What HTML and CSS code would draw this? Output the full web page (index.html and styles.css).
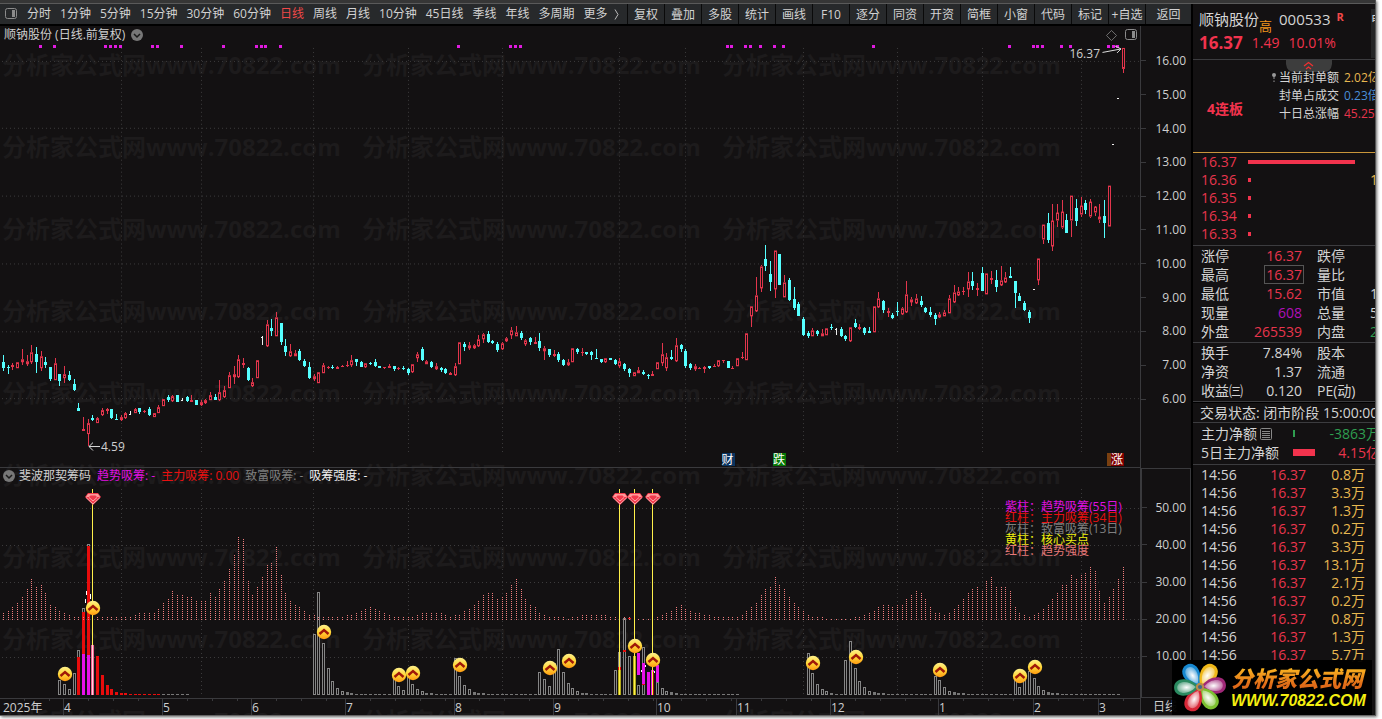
FILE: index.html
```html
<!DOCTYPE html>
<html lang="zh-CN">
<head>
<meta charset="utf-8">
<title>顺钠股份 000533 日线</title>
<link rel="stylesheet" href="styles.css">
</head>
<body>
<div class="app">
  <div class="titlebar"></div>
  <div class="main">
    <section class="left">
      <nav class="toolbar">
        <div class="periods">
          <svg class="ico-panel" viewBox="0 0 12 12"><rect x="0.5" y="0.5" width="11" height="10" rx="2" fill="none" stroke="#8b8b8b"/><rect x="7" y="2" width="3" height="7" fill="#8b8b8b"/></svg>
          <button>分时</button><button>1分钟</button><button>5分钟</button><button>15分钟</button><button>30分钟</button><button>60分钟</button><button class="active">日线</button><button>周线</button><button>月线</button><button>10分钟</button><button>45日线</button><button>季线</button><button>年线</button><button>多周期</button><button class="more">更多<svg viewBox="0 0 5 11"><path d="M1 0.5L4 5.5L1 10.5" fill="none" stroke="#bbb"/></svg></button>
        </div>
        <div class="tools">
          <button>复权</button><button>叠加</button><button>多股</button><button>统计</button><button>画线</button><button>F10</button><button>逐分</button><button>同资</button><button>开资</button><button>简框</button><button>小窗</button><button>代码</button><button>标记</button><button>+自选</button><button class="back">返回</button>
        </div>
      </nav>
      <div class="charts">
        <div class="watermark" id="watermark" aria-hidden="true"></div>
        <div class="plot price-plot">
          <svg class="canvas" id="price" viewBox="0 26 1140 442" preserveAspectRatio="none"></svg>
          <div class="plot-title"><span>顺钠股份 (日线.前复权)</span><svg class="ico-circle" viewBox="0 0 12 12"><circle cx="6" cy="6" r="6" fill="#777"/><path d="M3 5L6 8L9 5" fill="none" stroke="#1a1a1a" stroke-width="1.5"/></svg></div>
          <div class="plot-actions">
            <svg class="ico-diamond" viewBox="0 0 12 12"><path d="M6 0.5L11.5 6L6 11.5L0.5 6Z" fill="none" stroke="#777"/></svg>
            <svg class="ico-panel" viewBox="0 0 12 12"><rect x="0.5" y="0.5" width="11" height="10" rx="2" fill="none" stroke="#8b8b8b"/><rect x="7" y="2" width="3" height="7" fill="#8b8b8b"/></svg>
          </div>
          <span class="mark high">16.37</span>
          <span class="mark low">4.59</span>
          <span class="flag cai">财</span><span class="flag die">跌</span><span class="flag zhang">涨</span>
        </div>
        <div class="scale price-scale"><span>16.00</span><span>15.00</span><span>14.00</span><span>13.00</span><span>12.00</span><span>11.00</span><span>10.00</span><span>9.00</span><span>8.00</span><span>7.00</span><span>6.00</span></div>
        <div class="plot ind-plot">
          <svg class="canvas" id="indicator" viewBox="0 468 1140 230" preserveAspectRatio="none"></svg>
          <div class="ind-title"><svg class="ico-circle" viewBox="0 0 12 12"><circle cx="6" cy="6" r="6" fill="#777"/><path d="M3 5L6 8L9 5" fill="none" stroke="#1a1a1a" stroke-width="1.5"/></svg><span>斐波那契筹码</span><span class="magenta">趋势吸筹: -</span><span class="pure-red">主力吸筹: 0.00</span><span class="grey">致富吸筹: -</span><span class="white">吸筹强度: -</span></div>
          <div class="legend"><span class="magenta">紫柱：趋势吸筹(55日)</span><span class="pure-red">红柱：主力吸筹(34日)</span><span class="grey">灰柱：致富吸筹(13日)</span><span class="yellow">黄柱：核心买点</span><span class="salmon">红柱：趋势强度</span></div>
        </div>
        <div class="scale ind-scale"><span>50.00</span><span>40.00</span><span>30.00</span><span>20.00</span><span>10.00</span></div>
        <div class="months"><span>2025年</span><span>4</span><span>5</span><span>6</span><span>7</span><span>8</span><span>9</span><span>10</span><span>11</span><span>12</span><span>1</span><span>2</span><span>3</span></div>
        <div class="period-name">日线</div>
      </div>
    </section>
    <aside class="quote">
      <header>
        <div class="name"><span class="stock">顺钠股份</span><span class="tag">高</span><span class="code">000533</span><b>R</b><span class="edge">电</span></div>
        <div class="last"><strong>16.37</strong><span>1.49</span><span>10.01%</span></div>
      </header>
      <div class="board">
        <svg class="pull" viewBox="0 0 46 12"><path d="M0 0H46V4Q45 12 38 12H8Q1 12 0 4Z" fill="#3d3d3d"/><path d="M18 6L22.500 2.500L27 6M20 9L22.500 7L25 9" fill="none" stroke="#f23030" stroke-width="1.200"/></svg>
        <strong>4连板</strong>
        <table>
          <tr><th><svg viewBox="0 0 4 10"><circle cx="2" cy="2" r="2" fill="#999"/><path d="M2 3V6M2 7.500V9" stroke="#999"/></svg>当前封单额</th><td class="gold">2.02亿</td></tr>
          <tr><th>封单占成交</th><td class="blue">0.23倍</td></tr>
          <tr><th>十日总涨幅</th><td class="red">45.25%</td></tr>
        </table>
      </div>
      <ul class="depth">
        <li><span>16.37</span><i class="full"></i></li><li><span>16.36</span><i></i><em>1</em></li><li><span>16.35</span><i></i></li><li><span>16.34</span><i></i></li><li><span>16.33</span><i></i></li>
      </ul>
      <table class="stats">
        <tr><th>涨停</th><td class="red">16.37</td><th>跌停</th><td></td></tr>
        <tr><th>最高</th><td class="red"><span class="boxed">16.37</span></td><th>量比</th><td></td></tr>
        <tr><th>最低</th><td class="red">15.62</td><th>市值</th><td>1</td></tr>
        <tr><th>现量</th><td class="purple">608</td><th>总量</th><td>5</td></tr>
        <tr><th>外盘</th><td class="red">265539</td><th>内盘</th><td class="green">2</td></tr>
      </table>
      <table class="stats">
        <tr><th>换手</th><td>7.84%</td><th>股本</th><td></td></tr>
        <tr><th>净资</th><td>1.37</td><th>流通</th><td></td></tr>
        <tr><th>收益㈢</th><td>0.120</td><th>PE(动)</th><td></td></tr>
      </table>
      <div class="status">交易状态: 闭市阶段 15:00:00</div>
      <div class="flows">
        <div><span>主力净额</span><svg class="ico-list" viewBox="0 0 12 12"><rect x="0.500" y="0.500" width="11" height="11" rx="1" fill="none" stroke="#888"/><path d="M2 3.500H10M2 5.500H10M2 7.500H10M2 9.500H10" stroke="#888"/></svg><i class="out"></i><span class="val green">-3863万</span></div>
        <div><span>5日主力净额</span><i class="in"></i><span class="val red">4.15亿</span></div>
      </div>
      <table class="ticks">
        <tr><td>14:56</td><td>16.37</td><td>0.8万</td></tr><tr><td>14:56</td><td>16.37</td><td>3.3万</td></tr><tr><td>14:56</td><td>16.37</td><td>1.3万</td></tr><tr><td>14:56</td><td>16.37</td><td>0.2万</td></tr><tr><td>14:56</td><td>16.37</td><td>3.3万</td></tr><tr><td>14:56</td><td>16.37</td><td>13.1万</td></tr><tr><td>14:56</td><td>16.37</td><td>2.1万</td></tr><tr><td>14:56</td><td>16.37</td><td>0.2万</td></tr><tr><td>14:56</td><td>16.37</td><td>0.8万</td></tr><tr><td>14:56</td><td>16.37</td><td>1.3万</td></tr><tr><td>14:56</td><td>16.37</td><td>5.7万</td></tr>
      </table>
    </aside>
  </div>
  <div class="logo">
    <svg viewBox="0 0 52 52">
      <defs>
        <radialGradient id="lp"><stop offset="0" stop-color="#fff"/><stop offset="1" stop-color="#fff" stop-opacity="0.350"/></radialGradient>
      </defs>
      <g id="petals"></g>
      <circle cx="27" cy="25" r="4" fill="#b98a4a"/><circle cx="27" cy="25" r="2" fill="#3c6a8a"/>
    </svg>
    <div class="logo-text"><span class="cn">分析家公式网</span><span class="url">WWW.70822.COM</span></div>
  </div>
</div>
<script src="chart.js"></script>
</body>
</html>
```
FILE: styles.css
```css
* { box-sizing: border-box; }
html { background: #fff; }
body { margin: 0; font: 12px/18px "Open Sans", "Noto Sans CJK SC", sans-serif; color: #cfcfcf; overflow: hidden; }
button { font: inherit; color: inherit; background: none; border: 0; padding: 0; white-space: nowrap; }
table { border-collapse: collapse; border-spacing: 0; }
th, td { padding: 0; font-weight: 400; text-align: left; }
svg { display: block; flex: none; }

.app { position: relative; display: flex; flex-direction: column; height: calc(100vh - 3px); margin: 0 6px 3px 0; background: #131112; border-right: 1px solid #555; border-bottom: 1px solid #666; box-shadow: 1px 1px 3px #666; }
.titlebar { height: 4px; background: #363636; border-bottom: 1px solid #5a5a5a; }
.main { flex: 1; min-height: 0; display: grid; grid-template-columns: minmax(0, 1fr) 182px; }
.left { display: flex; flex-direction: column; min-width: 0; min-height: 0; border-right: 2px solid #000; }

.toolbar { display: flex; height: 22px; background: #27292b; border-bottom: 2px solid #000; overflow: hidden; line-height: 22px; color: #d2d2d2; }
.periods { flex: 1; display: flex; align-items: center; gap: 9px; padding-left: 5px; overflow: hidden; }
.periods .ico-panel { margin-right: 1px; }
.ico-panel, .ico-circle, .ico-list { width: 12px; height: 12px; }
.ico-diamond { width: 11px; height: 11px; }
.active { color: #f04848; }
.more { display: flex; align-items: center; gap: 6px; }
.more svg { width: 5px; height: 11px; }
.tools { display: flex; }
.tools button { width: 37px; border-left: 1px solid #0a0a0a; }
.tools .back { width: 46px; }

.charts { position: relative; flex: 1; min-height: 0; display: grid; grid-template-columns: minmax(0, 1fr) 51px; grid-template-rows: minmax(0, 442fr) minmax(0, 230fr) 17px; overflow: hidden; }
.watermark { position: absolute; inset: -2px 51px 0 2px; display: grid; grid-template-columns: repeat(3, 360px); grid-auto-rows: 82px; font-weight: 700; font-size: 24px; line-height: 82px; color: #1d1b1c; white-space: nowrap; overflow: hidden; }
.plot { position: relative; min-width: 0; min-height: 0; }
.canvas { position: absolute; inset: 0; width: 100%; height: 100%; }
.price-plot { border-bottom: 1px solid #3a3a3d; }
.plot-title { position: relative; display: flex; align-items: center; gap: 6px; padding-left: 4px; }
.plot-actions { position: absolute; top: 3px; right: 3px; display: flex; align-items: center; gap: 8px; }
.mark { position: absolute; line-height: 14px; }
.high { top: 21px; right: 40px; }
.low { top: 414px; left: 101px; }
.flag { position: absolute; bottom: 1px; height: 13px; line-height: 13px; width: 13px; color: #fff; }
.cai { left: 63.3%; background: #0a3460; }
.die { left: 67.8%; background: #067806; }
.zhang { left: 97.1%; width: 17px; padding-left: 4px; background: linear-gradient(90deg, #7a4010 4px, #800000 4px); }
.ind-title { position: relative; display: flex; align-items: center; gap: 6px; padding-left: 3px; line-height: 16px; }
.ind-title .ico-circle { margin-right: -2px; }
.legend { position: absolute; top: 33px; right: 17px; display: flex; flex-direction: column; width: 118px; line-height: 11px; white-space: nowrap; }
.magenta { color: #e010e0; }
.pure-red { color: #e81010; }
.grey { color: #7f7f7f; }
.white { color: #f0f0f0; }
.yellow { color: #f0f010; }
.salmon { color: #e87a7a; }
.scale { position: relative; display: flex; flex-direction: column; border-left: 1px solid #3a3a3d; padding-right: 5px; }
.scale span { flex: 1; display: flex; align-items: center; justify-content: flex-end; }
.scale span::before { content: ""; width: 5px; border-top: 1px solid #3a3a3d; margin-right: auto; }
.price-scale { padding-top: 18px; padding-bottom: 52px; }
.ind-scale { padding-top: 20px; padding-bottom: 22px; border: 1px solid #3a3a3d; border-left-width: 2px; padding-right: 4px; }
.months { position: relative; display: grid; grid-template-columns: 63fr 99fr 89fr 94fr 109fr 99fr 103fr 80fr 94fr 108fr 95fr 65fr 42fr; border-top: 1px solid #3a3a3d; line-height: 18px; overflow: hidden; }
.months span { border-left: 1px solid #3a3a3d; background: repeating-linear-gradient(90deg, transparent 0 24px, #3a3a3d 24px 25px) 0 0 / 100% 2px no-repeat; }
.months span:first-child { padding-left: 3px; border: 0; }
.period-name { position: relative; padding-left: 12px; line-height: 18px; border-left: 1px solid #3a3a3d; }

.quote { min-width: 0; overflow: hidden; font-size: 14px; color: #d4d4d4; white-space: nowrap; }
.quote header { height: 56px; border-bottom: 1px solid #3c3c3f; padding-left: 6px; }
.name { position: relative; display: flex; align-items: center; height: 29px; font-size: 15px; }
.name .tag { font-size: 13px; color: #f0941c; align-self: flex-end; margin-bottom: -2px; }
.name .code { margin-left: 7px; }
.name b { font-size: 11px; color: #f04848; margin-left: 6px; align-self: flex-start; margin-top: 4px; }
.edge { position: absolute; right: -10px; top: 5px; height: 49px; line-height: 22px; width: 14px; background: #242526; font-size: 12px; }
.last { display: flex; align-items: center; gap: 9px; height: 20px; color: #f2334d; font-size: 14px; }
.last strong { font-size: 17px; }
.board { position: relative; display: flex; align-items: flex-start; height: 93px; border-bottom: 1px solid #c9963a; }
.pull { position: absolute; left: 93px; top: 0; width: 46px; height: 12px; }
.board strong { flex: none; width: 72px; padding: 40px 0 0 14px; color: #f2334d; }
.board table { position: relative; margin-top: 9px; font-size: 12px; line-height: 18px; }
.board th { display: flex; align-items: center; justify-content: flex-end; width: 74px; gap: 3px; }
.board th svg { width: 4px; height: 10px; }
.board td { padding-left: 5px; }
.gold { color: #e8b850; }
.blue { color: #4a8fd8; }
.red { color: #e8354d; }
.green { color: #2f9e50; }
.purple { color: #b010b8; }
.depth { list-style: none; margin: 0; padding: 0 0 2px 8px; color: #e8354d; }
.depth li { position: relative; display: flex; align-items: center; height: 18px; }
.depth span { width: 47px; }
.depth i { width: 3px; height: 4px; background: #f2334d; }
.depth .full { width: 107px; }
.depth em { position: absolute; right: -3px; font-style: normal; color: #e8b850; }
.stats { width: 185px; table-layout: fixed; border-top: 1px solid #3c3c3f; line-height: 19px; border-collapse: separate; padding-bottom: 1px; }
.stats td, .stats th { height: 19px; }
.stats th:first-child { width: 52px; padding-left: 8px; }
.stats td:nth-child(2) { width: 57px; text-align: right; }
.stats th:nth-child(3) { width: 60px; padding-left: 15px; }
.stats td:last-child { text-align: right; }
.boxed { display: inline-block; height: 19px; line-height: 17px; border: 1px solid #555; margin-right: -2px; padding: 0 1px; }
.stats + .stats { border-bottom: 1px solid #3c3c3f; }
.status { height: 21px; line-height: 20px; padding-left: 7px; border-bottom: 1px solid #3c3c3f; border-top: 1px solid #000; }
.flows { border-bottom: 1px solid #3c3c3f; padding-top: 1px; height: 42px; }
.flows div { display: flex; align-items: center; height: 19px; padding-left: 8px; }
.flows span:first-child { flex: none; }
.flows .ico-list { margin-left: 3px; }
.flows i { height: 7px; margin-left: auto; }
.flows .out { width: 2px; margin-right: 34px; background: #2f9e50; }
.flows .in { width: 22px; margin-right: 23px; background: #f2334d; }
.flows .val { flex: none; margin-right: -5px; }
.ticks { width: 164px; table-layout: fixed; margin: 1px 0 0 8px; line-height: 18px; }
.ticks td:nth-child(1) { width: 40px; }
.ticks td:nth-child(2) { width: 65px; text-align: right; color: #e8354d; }
.ticks td:last-child { width: 59px; text-align: right; color: #e8b850; }
.ticks tr:first-child td { width: auto; }
.ticks tr:first-child td:nth-child(1) { width: 40px; }
.ticks tr:first-child td:nth-child(2) { width: 65px; }

.logo { position: absolute; right: 3px; bottom: 0; display: flex; align-items: center; width: 200px; height: 55px; background: rgba(0, 0, 0, 0.96); }
.logo svg { width: 54px; height: 54px; }
.logo-text { display: flex; flex-direction: column; margin-left: 5px; font-style: italic; font-weight: 700; white-space: nowrap; }
.cn { font: italic 900 22px/26px "Noto Sans CJK SC", sans-serif; color: transparent; background: linear-gradient(180deg, #f8b020 20%, #e06a18 80%); background-clip: text; -webkit-background-clip: text; }
.url { font-family: "Liberation Sans", sans-serif; font-size: 16px; line-height: 22px; color: #f4ee10; }
```
FILE: chart.js
```js
// Horizontal position of the n-th trading day.
const dayX = n => Math.floor(3.5 + 4.7055 * n);
const rect = (x, y, w, h, fill) => `<rect x="${x}" y="${y}" width="${w}" height="${h}" fill="${fill}"/>`;
const hollow = (x, y, w, h, c) => `<rect x="${x + .5}" y="${y + .5}" width="${w - 1}" height="${Math.max(h - 1, 1)}" fill="#131112" stroke="${c}"/>`;

// kind, high, body top, body bottom, low
const candles = `c356 363 369 372,c366 368 369 375,r364 366 368 371,r363 363 369 369,r350 360 363 366,r356 362 365 367,r346 353 363 365,c348 355 363 374,r352 357 369 372,c358 363 366 369
c368 368 380 382,r359 364 381 381,c375 375 382 387,r367 375 379 384,c372 376 381 382,c380 385 391 392,c404 409 412 412,r418 430 432 432,r420 424 435 447,c416 419 421 422
r418 419 424 424,r409 411 416 417,r409 410 412 415,c410 410 419 420,c415 420 421 421,r416 418 421 422,r413 414 419 420,w412 415 416 416,r409 410 414 414,c409 409 413 415
r411 412 413 414,c408 410 416 417,r414 414 418 418,r406 408 414 414,r400 400 407 407,c396 398 401 403,r396 397 402 403,c396 396 403 403,w399 401 402 402,c397 398 402 403
r396 401 403 403,c401 401 406 406,r401 403 406 407,r400 401 404 405,r393 396 401 401,c395 398 401 401,r381 393 401 402,r387 391 398 399,r373 376 389 389,r367 375 378 385
r356 360 378 379,r359 364 366 369,c368 369 381 382,r379 383 387 388,r361 361 379 379,w337 338 339 346,r321 325 347 348,c320 329 332 337,r313 318 337 337,c324 324 343 346
c340 347 353 357,r345 352 357 358,r351 354 357 357,c350 352 361 362,c360 362 367 368,c363 368 379 380,r375 377 380 382,r373 373 384 384,r364 366 374 374,r367 368 369 370
c366 368 369 370,r367 368 370 370,r366 367 368 368,r362 366 367 368,r356 361 366 368,c360 360 363 367,c362 363 368 368,r364 364 368 369,c363 364 365 366,c360 363 367 368
c367 367 369 369,r368 368 369 370,r365 367 369 369,c367 367 370 372,r368 369 370 371,c367 369 370 371,c369 370 374 376,r365 365 373 374,r353 355 359 363,c348 350 361 362
r361 362 365 365,c362 363 368 369,r364 367 370 371,c368 369 371 373,c369 370 374 375,r373 374 376 376,r364 367 376 377,r343 343 365 365,c343 345 348 352,r343 346 349 351
r345 346 349 350,r336 340 347 348,r334 335 340 344,c332 335 343 344,c341 342 344 345,c343 345 351 353,r343 344 350 351,r338 339 342 343,r328 331 336 340,r327 333 337 337
c332 334 339 341,r340 341 345 347,c338 339 343 346,r338 343 345 345,c334 342 349 352,r347 349 352 361,c350 350 356 358,r351 355 357 358,c353 355 361 363,c360 361 366 367
r360 363 366 367,r349 349 363 363,c349 350 353 355,r349 353 354 357,c353 353 355 356,c352 353 356 361,c350 359 360 360,c360 360 363 364,r359 359 363 364,c359 359 361 361
c360 361 365 366,r359 362 367 369,c364 365 370 372,c369 370 374 378,r373 373 377 377,r368 371 374 374,c371 373 375 376,c375 376 377 380,r372 375 377 377,r363 363 370 370
r344 355 364 367,r354 358 369 372,c351 358 360 361,r339 346 362 363,c345 346 350 353,c350 352 367 369,c364 365 369 371,r365 367 370 372,r368 369 370 370,r367 368 370 374
c367 367 369 370,r365 367 368 368,r361 361 367 368,r361 361 362 364,c362 362 369 369,r367 369 370 370,r359 359 367 367,r353 358 359 360,r334 334 361 361,r307 307 317 328
r278 296 312 313,r266 267 289 293,c245 260 267 272,c262 275 283 292,r251 251 290 299,c255 255 286 286,r276 283 298 298,c279 281 301 302,c288 300 309 311,c303 305 317 317
c318 320 336 337,c332 334 337 339,r329 331 337 337,c331 332 335 337,r330 334 337 337,r329 329 336 336,c325 328 329 331,w329 330 331 336,c328 330 337 338,c336 337 340 342
r328 328 342 343,c320 324 328 329,r325 328 330 331,c328 329 334 336,c328 332 334 334,r307 307 333 333,r293 299 308 309,c301 302 311 314,r309 312 314 318,c314 316 319 320
c303 312 313 317,r308 309 315 316,r282 295 313 314,r298 300 303 307,r295 299 304 305,c297 302 306 308,c308 309 313 314,c308 313 316 318,c314 316 320 326,r313 315 318 319
r311 313 317 317,r296 299 314 314,r286 293 303 304,r288 292 296 297,r288 292 293 296,r273 282 290 298,c273 282 287 291,r284 289 291 297,c268 274 292 292,r274 274 295 295
r272 279 281 285,c271 281 288 293,r267 281 286 287,r273 278 283 284,c268 277 279 279,c282 282 294 309,c294 297 302 302,c302 304 311 312,c311 313 319 324,w290 290 291 291
r259 259 281 286,r225 225 240 244,c213 223 240 243,r204 221 247 252,r204 213 221 227,r200 212 228 229,c214 220 233 233,r196 196 221 237,c199 208 221 226,r197 206 215 217
c200 203 210 214,r199 202 217 218,r206 207 213 216,r204 217 220 223,c200 216 223 238,r186 186 227 227,w144 144 145 145,w98 98 99 99,r48 48 69 73`
  .split(/[,\n]+/).map(s => { s = s.trim(); return [s[0], ...s.slice(1).split(' ').map(Number)]; });

const vlines = [121, 201, 313, 408, 502, 619, 685, 803, 897, 982, 1081];
const grid = (rows, top, bottom) =>
  rows.map(y => `<path d="M2 ${y}.5H1140"/>`).join('') + vlines.map(x => `<path d="M${x}.5 ${top}V${bottom}"/>`).join('');
const gridGroup = s => `<g stroke="#3c3b3c" stroke-dasharray="1 3" fill="none">${s}</g>`;

let out = gridGroup(grid([61, 128, 196, 264, 332, 399], 48, 453));
[40, 54, 105, 110, 115, 120, 152, 157, 181, 223, 256, 261, 265, 280, 458, 510, 515, 520, 727, 731, 745, 750, 760, 774, 783, 873, 1009, 1033, 1037, 1042, 1061, 1070, 1108, 1113, 1117]
  .forEach(x => { out += rect(x - 1, 45, 3, 3, '#e01ae0'); });
candles.forEach(([k, h, t, b, l], i) => {
  const x = dayX(i);
  if (k === 'c') {
    out += rect(x, h, 1, Math.max(l - h, 1), '#5ff') + rect(x - 1, t, 3, Math.max(b - t, 1), '#5ff');
  } else if (k === 'r') {
    if (t > h) out += rect(x, h, 1, t - h, '#e2354c');
    if (l > b) out += rect(x, b, 1, l - b, '#e2354c');
    out += b - t < 3 ? rect(x - 1, t, 3, Math.max(b - t, 1), '#e2354c') : hollow(x - 1, t, 3, b - t, '#e2354c');
  } else {
    out += rect(x, h, 1, l - h, '#eee') + rect(x - 1, t, 2, 1, '#eee');
  }
});
out += '<path d="M1102.500 52.500L1121 49M1115 46L1121 49L1117 53M100 447.500H89M93 443.500L89 447.500L93 451.500" fill="none" stroke="#ddd"/>';
document.getElementById('price').innerHTML = `<g shape-rendering="crispEdges">${out}</g>`;

// Trend strength, one height per day.
const strength = [7,9,13,18,24,31,41,34,35,27,15,14,9,7,5,4,4,3,3,3,3,3,3,3,3,3,3,4,6,7,8,8,8,12,17,22,29,26,26,24,24,19,19,20,27,23,31,40,52,66,84,82,40,26,33,43,56,58,74,45,27,20,16,13,9,6,5,4,3,3,3,3,4,5,6,8,9,11,13,11,10,7,6,4,3,3,3,4,5,7,8,8,7,7,5,4,5,6,9,11,15,20,26,27,27,22,23,27,36,41,31,21,16,13,8,6,4,4,3,3,2,3,4,5,5,5,5,5,5,4,3,3,3,3,3,2,2,2,2,3,5,7,9,13,16,12,9,8,7,6,5,4,4,4,3,3,3,6,9,13,18,25,32,33,43,35,31,24,18,14,9,6,4,3,3,2,2,2,2,2,2,3,4,5,7,10,13,15,16,14,15,16,21,25,29,27,21,13,8,7,6,7,11,15,21,28,32,33,30,40,43,33,33,33,30,14,8,6,4,5,8,12,15,21,27,36,35,45,41,46,48,54,49,29,18,24,32,42,54];
let ind = gridGroup(grid([508, 545, 582, 619, 657], 489, 697));

// Runs of bar tops: first day, then one top per day.
const bars = [[12,680,684,689,673,650,608,544],[34,694,694,694,694,694,694],[66,634,592,643,668,681,688,691,692,693,694,694,694,694,694,694,694,694,676,686,690,676,684,689,691,693,693,694,694,694,694,658,676,685,689,692,693,693,694,694,694,694,694,694,694,694,694,694,694,672,679,686,663,649,672,683,688,691,693,693,694,694,694,694,694,670,652,618,656,675,685,647,672,670,682,688,691,692,693,694,694,694,694,694,694,694,694,694,694,694,694,694],[171,653,673,684,689,691,693,694,694,660,641,668,681,687,691,692,693,693,694,694,694,694,694,694,694,694,694,694,676,680,687,691,692,693,693,694,694,694,694,694,694,694,694,694,694,680,687,680,671,678,686,690,692,693,693,694,694,694,694,694,694,694,694,694,694,694,694,694]];
bars.forEach(([start, ...tops]) => tops.forEach((y, k) => {
  const x = dayX(start + k);
  ind += y > 691 ? rect(x - 1, y, 3, 695 - y, '#777') : hollow(x - 1, y, 3, 695 - y, '#858585');
}));
[[16,657],[17,612],[18,546],[20,656],[21,675],[22,685],[23,689],[24,692],[25,693],[26,693],[27,694],[28,694],[29,694],[30,694],[31,694],[32,694],[33,694]]
  .forEach(([i, y]) => { ind += rect(dayX(i) - 1, y, 3, 695 - y, '#e80c0c'); });
[[17,654,695],[18,655,695],[135,653,675],[136,663,684],[137,672,695],[138,670,695],[139,665,682]]
  .forEach(([i, a, b]) => { ind += rect(dayX(i) - 1, a, 3, b - a, '#e811e8'); });
strength.forEach((h, i) => { ind += `<path d="M${dayX(i)}.5 620V${620 - h}" stroke="#f07c7c" stroke-dasharray="1 1"/>`; });
ind += rect(dayX(131) - 1, 667, 3, 3, '#e80c0c') + rect(dayX(132) - 1, 650, 3, 2, '#e80c0c') + rect(dayX(133) - 1, 618, 3, 1, '#e80c0c') + rect(dayX(136) - 1, 684, 3, 1, '#e80c0c') + rect(dayX(138) + 1, 672, 1, 23, '#a00808');
ind += rect(92, 489, 1, 156, '#fff04a') + rect(91, 645, 3, 50, '#f06090') + rect(92, 645, 1, 50, '#ffd8d8');
[[131, 670], [134, 656], [138, 670]].forEach(([i, y]) => {
  ind += rect(dayX(i), 489, 1, 206, '#fff04a') + (i < 138 ? rect(dayX(i) - 1, y, 1, 695 - y, '#b0a818') + rect(dayX(i) + 1, y, 1, 695 - y, '#b0a818') : '');
});
ind += rect(86, 591, 1, 4, '#fff') + rect(85, 599, 1, 4, '#fff') + rect(90, 594, 1, 5, '#fff') + rect(645, 665, 1, 2, '#fff') + rect(641, 670, 1, 2, '#fff') + rect(654, 671, 1, 2, '#fff');

const gem = (x, y) => `<g transform="translate(${x} ${y})"><path d="M-5 0H5L8 4L0 12L-8 4Z" fill="#f23a4c"/><path d="M-5 1H5L7 4H-7Z" fill="#ff9a9a"/><path d="M-4 4L-2.500 2.500H2.500L4 4L0 8Z" fill="#f23a4c"/><path d="M-7 4.500L0 11L7 4.500M-4 4.500L0 8L4 4.500" fill="none" stroke="#ffc0c0" stroke-width="0.800"/></g>`;
const coin = (x, y) => `<g transform="translate(${x} ${y})"><circle r="7.200" fill="url(#gold)"/><path d="M-4.500 2L0 -2L4.500 2" fill="none" stroke="#a01808" stroke-width="2.400"/></g>`;
const icons = [93, 620, 635, 653].map(x => gem(x, 493)).join('') +
  [[93,608],[65,674],[324,632],[399,675],[413,673],[460,665],[550,668],[569,661],[635,646],[653,660],[813,663],[856,657],[940,670],[1020,676],[1035,667]].map(p => coin(...p)).join('');
document.getElementById('indicator').innerHTML = `<defs><linearGradient id="gold" x2="0" y2="1"><stop offset="0" stop-color="#fff08a"/><stop offset="0.500" stop-color="#ffd83a"/><stop offset="1" stop-color="#ff9a10"/></linearGradient></defs><g shape-rendering="crispEdges">${ind}</g>${icons}`;

document.getElementById('watermark').innerHTML = '<span>分析家公式网www.70822.com</span>'.repeat(27);
document.getElementById('petals').innerHTML = [[-33,'#1788d0'],[33,'#f0b818'],[85,'#a02878'],[143,'#7cc030'],[205,'#d82838'],[268,'#2a8a60']]
  .map(([a, c]) => `<g transform="rotate(${a} 27 25)"><path d="M27 24C16 15 17 0 27 0C37 0 38 15 27 24Z" fill="${c}"/><path d="M27 21C19 13 21 3 27 3C33 3 35 13 27 21Z" fill="url(#lp)"/></g>`).join('');
```
